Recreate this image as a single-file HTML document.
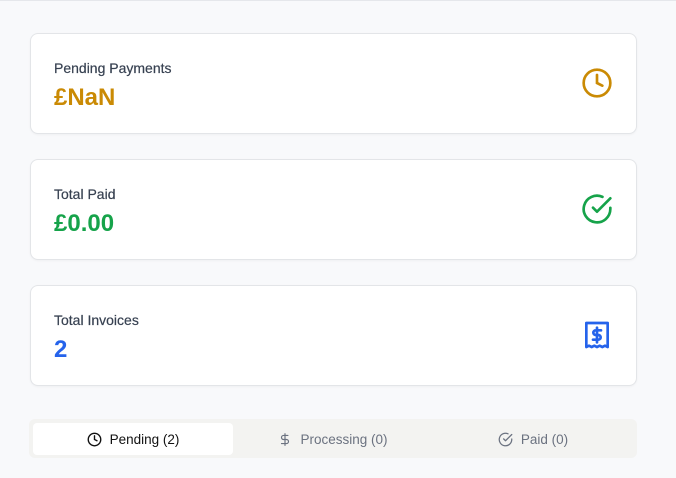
<!DOCTYPE html>
<html><head><style>
body{margin:0;width:676px;height:478px;background:#f8f9fb;font-family:"Liberation Sans",sans-serif;position:relative;overflow:hidden}
.top{position:absolute;left:0;top:0;width:676px;height:1px;background:#e5e7eb}
.card{position:absolute;left:30px;width:605px;height:99px;background:#fff;border:1px solid #e3e5e8;border-radius:8px;box-shadow:0 1px 2px rgba(0,0,0,.04)}
.lab{position:absolute;left:23px;top:26px;font-size:14px;color:#374151;-webkit-text-stroke:0.2px #374151}
.val{position:absolute;left:23px;top:50px;font-size:24px;font-weight:bold}
.ic{position:absolute;left:550px;top:33px}
.tabs{position:absolute;left:29px;top:419px;width:608px;height:39px;background:#f3f3f1;border-radius:6px}
.tab{position:absolute;top:4px;height:32px;width:200px;display:flex;align-items:center;justify-content:center;font-size:13.5px;color:#6b7280;gap:8px}
.tab.a{background:#fff;color:#111;border-radius:4px}
</style></head><body>
<div class="top"></div>
<div class="card" style="top:33px"><div class="lab">Pending Payments</div><div class="val" style="color:#ca8a04">£NaN</div>
<svg class="ic" width="32" height="32" viewBox="0 0 24 24" fill="none" stroke="#ca8a04" stroke-width="2" stroke-linecap="round"><circle cx="12" cy="12" r="10"/><path d="M12 6v6l4 2"/></svg></div>
<div class="card" style="top:159px"><div class="lab">Total Paid</div><div class="val" style="color:#16a34a">£0.00</div>
<svg class="ic" width="32" height="32" viewBox="0 0 24 24" fill="none" stroke="#16a34a" stroke-width="2" stroke-linecap="round" stroke-linejoin="round"><path d="M22 11.1V12a10 10 0 1 1-5.9-9.1"/><path d="M22 4 12 14l-3-3"/></svg></div>
<div class="card" style="top:285px"><div class="lab">Total Invoices</div><div class="val" style="color:#2563eb">2</div>
<svg class="ic" width="32" height="32" viewBox="0 0 24 24" fill="none" stroke="#2563eb" stroke-width="2"><path d="M4 3h16v18l-2-1-2 1-2-1-2 1-2-1-2 1-2-1-2 1z" stroke-linejoin="round"/><path d="M15 8.5h-4a1.7 1.7 0 0 0 0 3.5h2a1.7 1.7 0 0 1 0 3.5H9M12 6.5v11" stroke-linecap="round"/></svg></div>
<div class="tabs">
<div class="tab a" style="left:4px"><svg width="15" height="15" viewBox="0 0 24 24" fill="none" stroke="#111" stroke-width="2.2" stroke-linecap="round"><circle cx="12" cy="12" r="10"/><path d="M12 6v6l4 2"/></svg>Pending (2)</div>
<div class="tab" style="left:204px"><svg width="14" height="15" viewBox="0 0 24 24" fill="none" stroke="#6b7280" stroke-width="2" stroke-linecap="round"><path d="M12 2v20M17 5H9.5a3.5 3.5 0 0 0 0 7h5a3.5 3.5 0 0 1 0 7H6"/></svg>Processing (0)</div>
<div class="tab" style="left:404px"><svg width="15" height="15" viewBox="0 0 24 24" fill="none" stroke="#6b7280" stroke-width="2" stroke-linecap="round" stroke-linejoin="round"><path d="M22 11.1V12a10 10 0 1 1-5.9-9.1"/><path d="M22 4 12 14l-3-3"/></svg>Paid (0)</div>
</div>
</body></html>
